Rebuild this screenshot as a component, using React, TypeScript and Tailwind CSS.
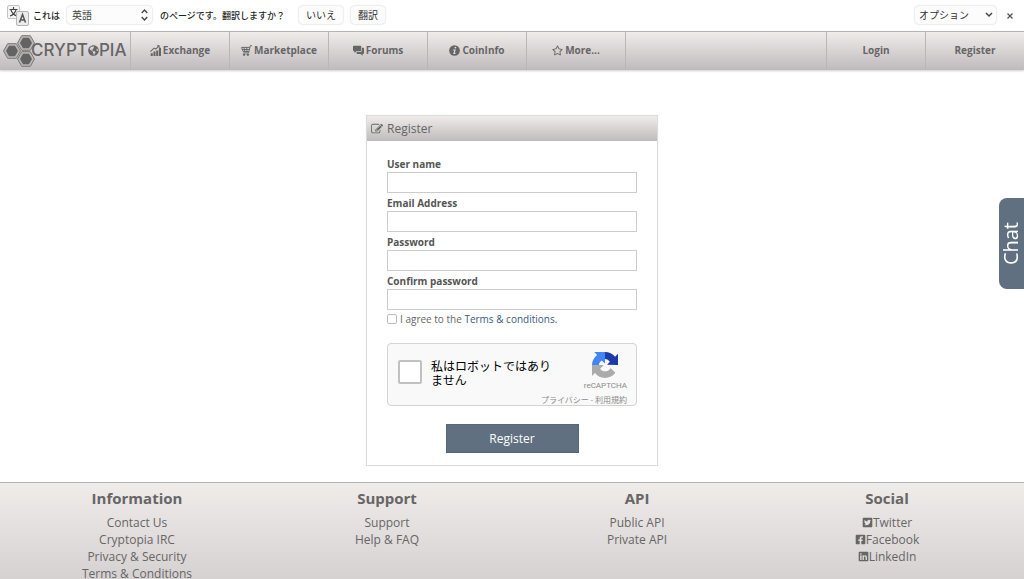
import React from 'react';
import { FaRegStar, FaTwitterSquare, FaFacebookSquare, FaLinkedin, FaGlobeAmericas } from 'react-icons/fa';

const ExchangeIcon = () => (
  <svg width="11" height="11" viewBox="0 0 16 16" fill="currentColor" aria-hidden="true">
    <path d="M1 12h3v4H1zM5 9.5h3V16H5zM9 8h3v8H9zM13 4h3v12h-3z" />
    <path d="M0.5 9.5L6 4.5l2.5 1.5L12 2.5" fill="none" stroke="currentColor" strokeWidth="1.5" />
    <path d="M9.5 0.5H14V5z" />
  </svg>
);

const CartIcon = () => (
  <svg width="11" height="11" viewBox="0 0 16 16" fill="none" stroke="currentColor" strokeWidth="1.4" aria-hidden="true">
    <path d="M16 1h-2.5L11 11.5H3.5M0.8 3.5H12.6M0.8 3.5L3 9.5h8.3M1.8 6.5h10M4.5 3.5l1 6M8.5 3.5v6" />
    <circle cx="4.5" cy="14" r="1.2" fill="currentColor" />
    <circle cx="10" cy="14" r="1.2" fill="currentColor" />
  </svg>
);

const ForumsIcon = () => (
  <svg width="11" height="11" viewBox="0 0 16 16" fill="currentColor" aria-hidden="true">
    <path d="M1.2 1h9.6Q12 1 12 2.2v5.6Q12 9 10.8 9H5l-3 2.7V9h-.8Q0 9 0 7.8V2.2Q0 1 1.2 1z" />
    <path d="M13 4h1.8Q16 4 16 5.2v6.6Q16 13 14.8 13H14v2.7L11 13H6.2Q5 13 5 11.8V11l.8-1H11q2 0 2-2z" />
  </svg>
);

const InfoIcon = () => (
  <svg width="11" height="11" viewBox="0 0 16 16" aria-hidden="true">
    <circle cx="8" cy="8" r="7.8" fill="currentColor" />
    <circle cx="9.3" cy="3.8" r="1.3" fill="#e3dfde" />
    <path d="M6 7.2h2.8l-1.6 5h2.2" fill="none" stroke="#e3dfde" strokeWidth="1.6" />
  </svg>
);

const EditIcon = () => (
  <svg width="12" height="12" viewBox="0 0 1792 1792" fill="currentColor" aria-hidden="true">
    <path d="M888 1184l116-116-152-152-116 116v56h96v96h56zm440-720q-16-16-33 1l-350 350q-17 17-1 33t33-1l350-350q17-17 1-33zm80 594v190q0 119-84.5 203.5t-203.5 84.5h-832q-119 0-203.5-84.5t-84.5-203.5v-832q0-119 84.5-203.5t203.5-84.5h832q63 0 117 25 15 7 18 23 3 17-9 29l-49 49q-14 14-32 8-23-6-45-6h-832q-66 0-113 47t-47 113v832q0 66 47 113t113 47h832q66 0 113-47t47-113v-126q0-13 9-22l64-64q15-15 35-7t20 29zm-96-738l288 288-672 672h-288v-288zm444 132l-92 92-288-288 92-92q28-28 68-28t68 28l152 152q28 28 28 68t-28 68z" />
  </svg>
);

const TranslateIcon = () => (
  <svg width="22" height="21" viewBox="0 0 22 21" className="shrink-0" aria-hidden="true">
    <rect x="0.5" y="0.5" width="12" height="13" rx="1.5" fill="#f4f4f4" stroke="#c4c4c4" />
    <path d="M6.5 2v2M2.5 4.5h8M4 5q1.5 4.5 6 6M9 5q-1.5 4.5-6 6" fill="none" stroke="#444" strokeWidth="1.2" />
    <rect x="9.5" y="6.5" width="12" height="14" rx="1.5" fill="#ececec" stroke="#b4b4b4" />
    <path d="M12.5 17.5l3-8 3 8M13.500 15h4" fill="none" stroke="#555" strokeWidth="1.5" />
  </svg>
);

const hexagons = [[24, 8], [10, 16], [24, 24]];

const HexLogo = () => (
  <svg width="33" height="32" viewBox="0 0 33 32" className="shrink-0" aria-hidden="true">
    {hexagons.map(([x, y]) => (
      <g key={`${x}-${y}`} transform={`translate(${x} ${y})`}>
        <path d="M-8.5 0L-4.3 -7.3H4.3L8.5 0L4.3 7.3H-4.3Z" fill="#b9b6b5" stroke="#777" strokeWidth="1" />
        <path d="M-6 0L-3 -5.3H3L6 0L3 5.3H-3Z" fill="#636363" />
      </g>
    ))}
  </svg>
);

const RecaptchaLogo = () => (
  <svg width="26" height="26" viewBox="0 0 64 64" aria-hidden="true">
    <path d="M64 32c0-.5 0-.9 0-1.4V4.600l-7.200 7.200C51 4.600 42 0 32 0v17c5 0 9.500 2.500 12 7l-7 7.500z" fill="#1c3aa9" />
    <path d="M32 0H5.500l7.200 7.200C5 13 0 22 0 32h17c.3-4 3-8.500 7-11l8 7.500z" fill="#4285f4" />
    <path d="M0 32v27l7.200-7.200C13 59.400 22 64 32 64c10.500 0 19.700-5 25.500-12.800L45.700 39.300C42 46 37 47.500 32 47.500c-5 0-9-2-12-6.500l9-9z" fill="#ababab" />
  </svg>
);

const navItems = [
  { label: 'Exchange', icon: <ExchangeIcon /> },
  { label: 'Marketplace', icon: <CartIcon /> },
  { label: 'Forums', icon: <ForumsIcon /> },
  { label: 'CoinInfo', icon: <InfoIcon /> },
  { label: 'More...', icon: <FaRegStar size={11} /> },
];

const fields = [
  { id: 'username', label: 'User name', type: 'text' },
  { id: 'email', label: 'Email Address', type: 'email' },
  { id: 'password', label: 'Password', type: 'password' },
  { id: 'confirm', label: 'Confirm password', type: 'password' },
];

const footerColumns = [
  {
    title: 'Information',
    links: [
      { label: 'Contact Us' },
      { label: 'Cryptopia IRC' },
      { label: 'Privacy & Security' },
      { label: 'Terms & Conditions' },
    ],
  },
  { title: 'Support', links: [{ label: 'Support' }, { label: 'Help & FAQ' }] },
  { title: 'API', links: [{ label: 'Public API' }, { label: 'Private API' }] },
  {
    title: 'Social',
    links: [
      { label: 'Twitter', icon: <FaTwitterSquare size={11} /> },
      { label: 'Facebook', icon: <FaFacebookSquare size={11} /> },
      { label: 'LinkedIn', icon: <FaLinkedin size={11} /> },
    ],
  },
];

const TranslateBar: React.FC = () => (
  <div className="flex h-[31px] items-center bg-white pl-[7px] pr-2 pb-px text-[#222]">
    <TranslateIcon />
    <label htmlFor="language" className="ml-1 pt-[2px] text-[9px] font-medium">これは</label>
    <div className="relative ml-[7px]">
      <select id="language" className="block h-[18px] w-[85px] appearance-none rounded-sm bg-[#fcfcfc] pl-[5px] text-[10px] leading-[18px] text-[#444] shadow-[0_0_2px_rgba(0,0,0,0.25)]">
        <option>英語</option>
      </select>
      <svg width="7" height="12" viewBox="0 0 7 12" className="pointer-events-none absolute right-1 top-[3px]" fill="none" stroke="#444" strokeWidth="1.3" aria-hidden="true">
        <path d="M0.7 4L3.5 1l2.8 3M0.7 8l2.8 3 2.8-3" />
      </svg>
    </div>
    <span className="ml-2 whitespace-nowrap pt-[2px] text-[9px] font-medium">のページです。翻訳しますか？</span>
    <button className="ml-[14px] h-[18px] w-11 rounded-sm bg-[#fcfcfc] text-[10px] leading-[18px] text-[#333] shadow-[0_0_2px_rgba(0,0,0,0.25)]">いいえ</button>
    <button className="ml-2 h-[18px] w-[34px] rounded-sm bg-[#fcfcfc] text-[10px] leading-[18px] text-[#333] shadow-[0_0_2px_rgba(0,0,0,0.25)]">翻訳</button>
    <div className="relative ml-auto">
      <select aria-label="オプション" className="block h-[18px] w-[81px] appearance-none rounded-sm bg-[#fcfcfc] pl-1 text-[10px] leading-[18px] text-[#333] shadow-[0_0_2px_rgba(0,0,0,0.25)]">
        <option>オプション</option>
      </select>
      <svg width="8" height="6" viewBox="0 0 8 6" className="pointer-events-none absolute right-[3px] top-[6px]" fill="none" stroke="#444" strokeWidth="1.5" aria-hidden="true">
        <path d="M1 1l3 3 3-3" />
      </svg>
    </div>
    <button aria-label="閉じる" className="ml-2 flex h-4 w-3 items-center justify-center pt-[2px]">
      <svg width="6" height="6" viewBox="0 0 6 6" stroke="#555" strokeWidth="1.3" aria-hidden="true">
        <path d="M0.5 0.5l5 5M5.500 0.5l-5 5" />
      </svg>
    </button>
  </div>
);

const NavBar: React.FC = () => (
  <nav className="flex h-[39px] items-stretch border-t border-[#b5b3b3] bg-linear-to-b from-[#f0ecea] to-[#bfbbbd] text-[10px] font-bold text-[#666] shadow-[0_1px_2px_rgba(0,0,0,0.2)]">
    <a href="#" className="flex w-[130px] items-center pb-px pl-[2px] font-['Inter'] text-[17px] font-medium leading-none text-[#666]">
      <HexLogo />
      <span className="-ml-1 flex items-center">
        CRYPT
        <FaGlobeAmericas size={11} />
        PIA
      </span>
    </a>
    {navItems.map(item => (
      <a key={item.label} href="#" className="flex w-[99px] items-center justify-center gap-[2px] border-l border-[#b9b6b5] pb-[2px]">
        {item.icon}
        {item.label}
      </a>
    ))}
    <div className="flex-1 border-l border-[#b9b6b5]" />
    <a href="#" className="flex w-[99px] items-center justify-center border-l border-[#b9b6b5] pb-[2px]">Login</a>
    <a href="#" className="flex w-[99px] items-center justify-center border-l border-[#b9b6b5] pb-[2px]">Register</a>
  </nav>
);

const Recaptcha: React.FC = () => (
  <div className="mt-[15px] flex h-[63px] items-start overflow-hidden rounded-sm border border-[#d3d3d3] bg-[#f9f9f9] pl-[10px] pr-[9px]">
    <input id="robot" type="checkbox" className="mt-4 size-6 shrink-0 appearance-none rounded-xs border-2 border-[#c1c1c1] bg-white" />
    <label htmlFor="robot" className="ml-[9px] mt-4 w-[121px] shrink-0 text-[12px] leading-[14px] text-black">
      私はロボットではありません
    </label>
    <div className="flex min-w-0 flex-1 flex-col items-end pt-2 font-['Roboto','Noto_Sans_CJK_JP',sans-serif] text-[8px] text-[#8a8a8a]">
      <div className="flex flex-col items-center">
        <RecaptchaLogo />
        <span className="leading-4">reCAPTCHA</span>
      </div>
      <div className="whitespace-nowrap leading-[14px]">
        <a href="#">プライバシー</a> - <a href="#">利用規約</a>
      </div>
    </div>
  </div>
);

const RegisterCard: React.FC = () => (
  <section className="w-[292px] border border-[#dddbdb] bg-white shadow-[0_0_1px_rgba(0,0,0,0.1)]">
    <h1 className="flex h-[25px] items-center gap-1 bg-linear-to-b from-[#f0ecea] to-[#bfbbbd] pl-1 text-[12px] text-[#666]">
      <EditIcon />
      Register
    </h1>
    <form className="flex flex-col px-5 pb-3 pt-[13px]">
      {fields.map(field => (
        <div key={field.id} className="flex flex-col">
          <label htmlFor={field.id} className="h-[18px] text-[10px] font-bold leading-5 text-[#555]">{field.label}</label>
          <input id={field.id} type={field.type} className="h-[21px] border border-[#ccc] bg-white px-1 text-[11px] outline-none" />
        </div>
      ))}
      <div className="flex h-[18px] items-center gap-[3px] text-[10px] text-[#666]">
        <input id="terms" type="checkbox" className="size-[10px] appearance-none rounded-xs border border-[#bbb] bg-white" />
        <label htmlFor="terms">
          I agree to the <a href="#" className="text-[#3b5a80]">Terms &amp; conditions.</a>
        </label>
      </div>
      <Recaptcha />
      <button type="submit" className="mt-[18px] h-[29px] w-[133px] self-center border border-[#57677a] bg-[#607080] text-[12px] text-white">
        Register
      </button>
    </form>
  </section>
);

const Footer: React.FC = () => (
  <footer className="grid grid-cols-4 border-t border-[#b5b3b3] bg-linear-to-b from-[#f0ecea] to-[#bfbbbd] px-3 pb-20 pt-[3px] text-center text-[#666]">
    {footerColumns.map(column => (
      <div key={column.title}>
        <h2 className="text-[15px] font-bold leading-6">{column.title}</h2>
        <ul className="mt-1 text-[12px] leading-[17px]">
          {column.links.map(link => (
            <li key={link.label} className="flex justify-center">
              <a href="#" className="flex h-[17px] items-center">
                {'icon' in link && link.icon}
                {link.label}
              </a>
            </li>
          ))}
        </ul>
      </div>
    ))}
  </footer>
);

const App: React.FC = () => {
  return (
    <div className="min-h-screen bg-white font-['Open_Sans','Noto_Sans_CJK_JP',sans-serif]">
      <TranslateBar />
      <NavBar />
      <main className="flex justify-center pb-4 pt-[45px]">
        <RegisterCard />
      </main>
      <Footer />
      {/* Chat tab on the right edge */}
      <button className="fixed right-0 top-[198px] flex h-[91px] w-[25px] items-center justify-center rounded-l-lg bg-[#607080] pr-[2px] text-[20px] text-white">
        <span className="rotate-180 leading-6 [writing-mode:vertical-rl]">Chat</span>
      </button>
    </div>
  );
};

export default App;
